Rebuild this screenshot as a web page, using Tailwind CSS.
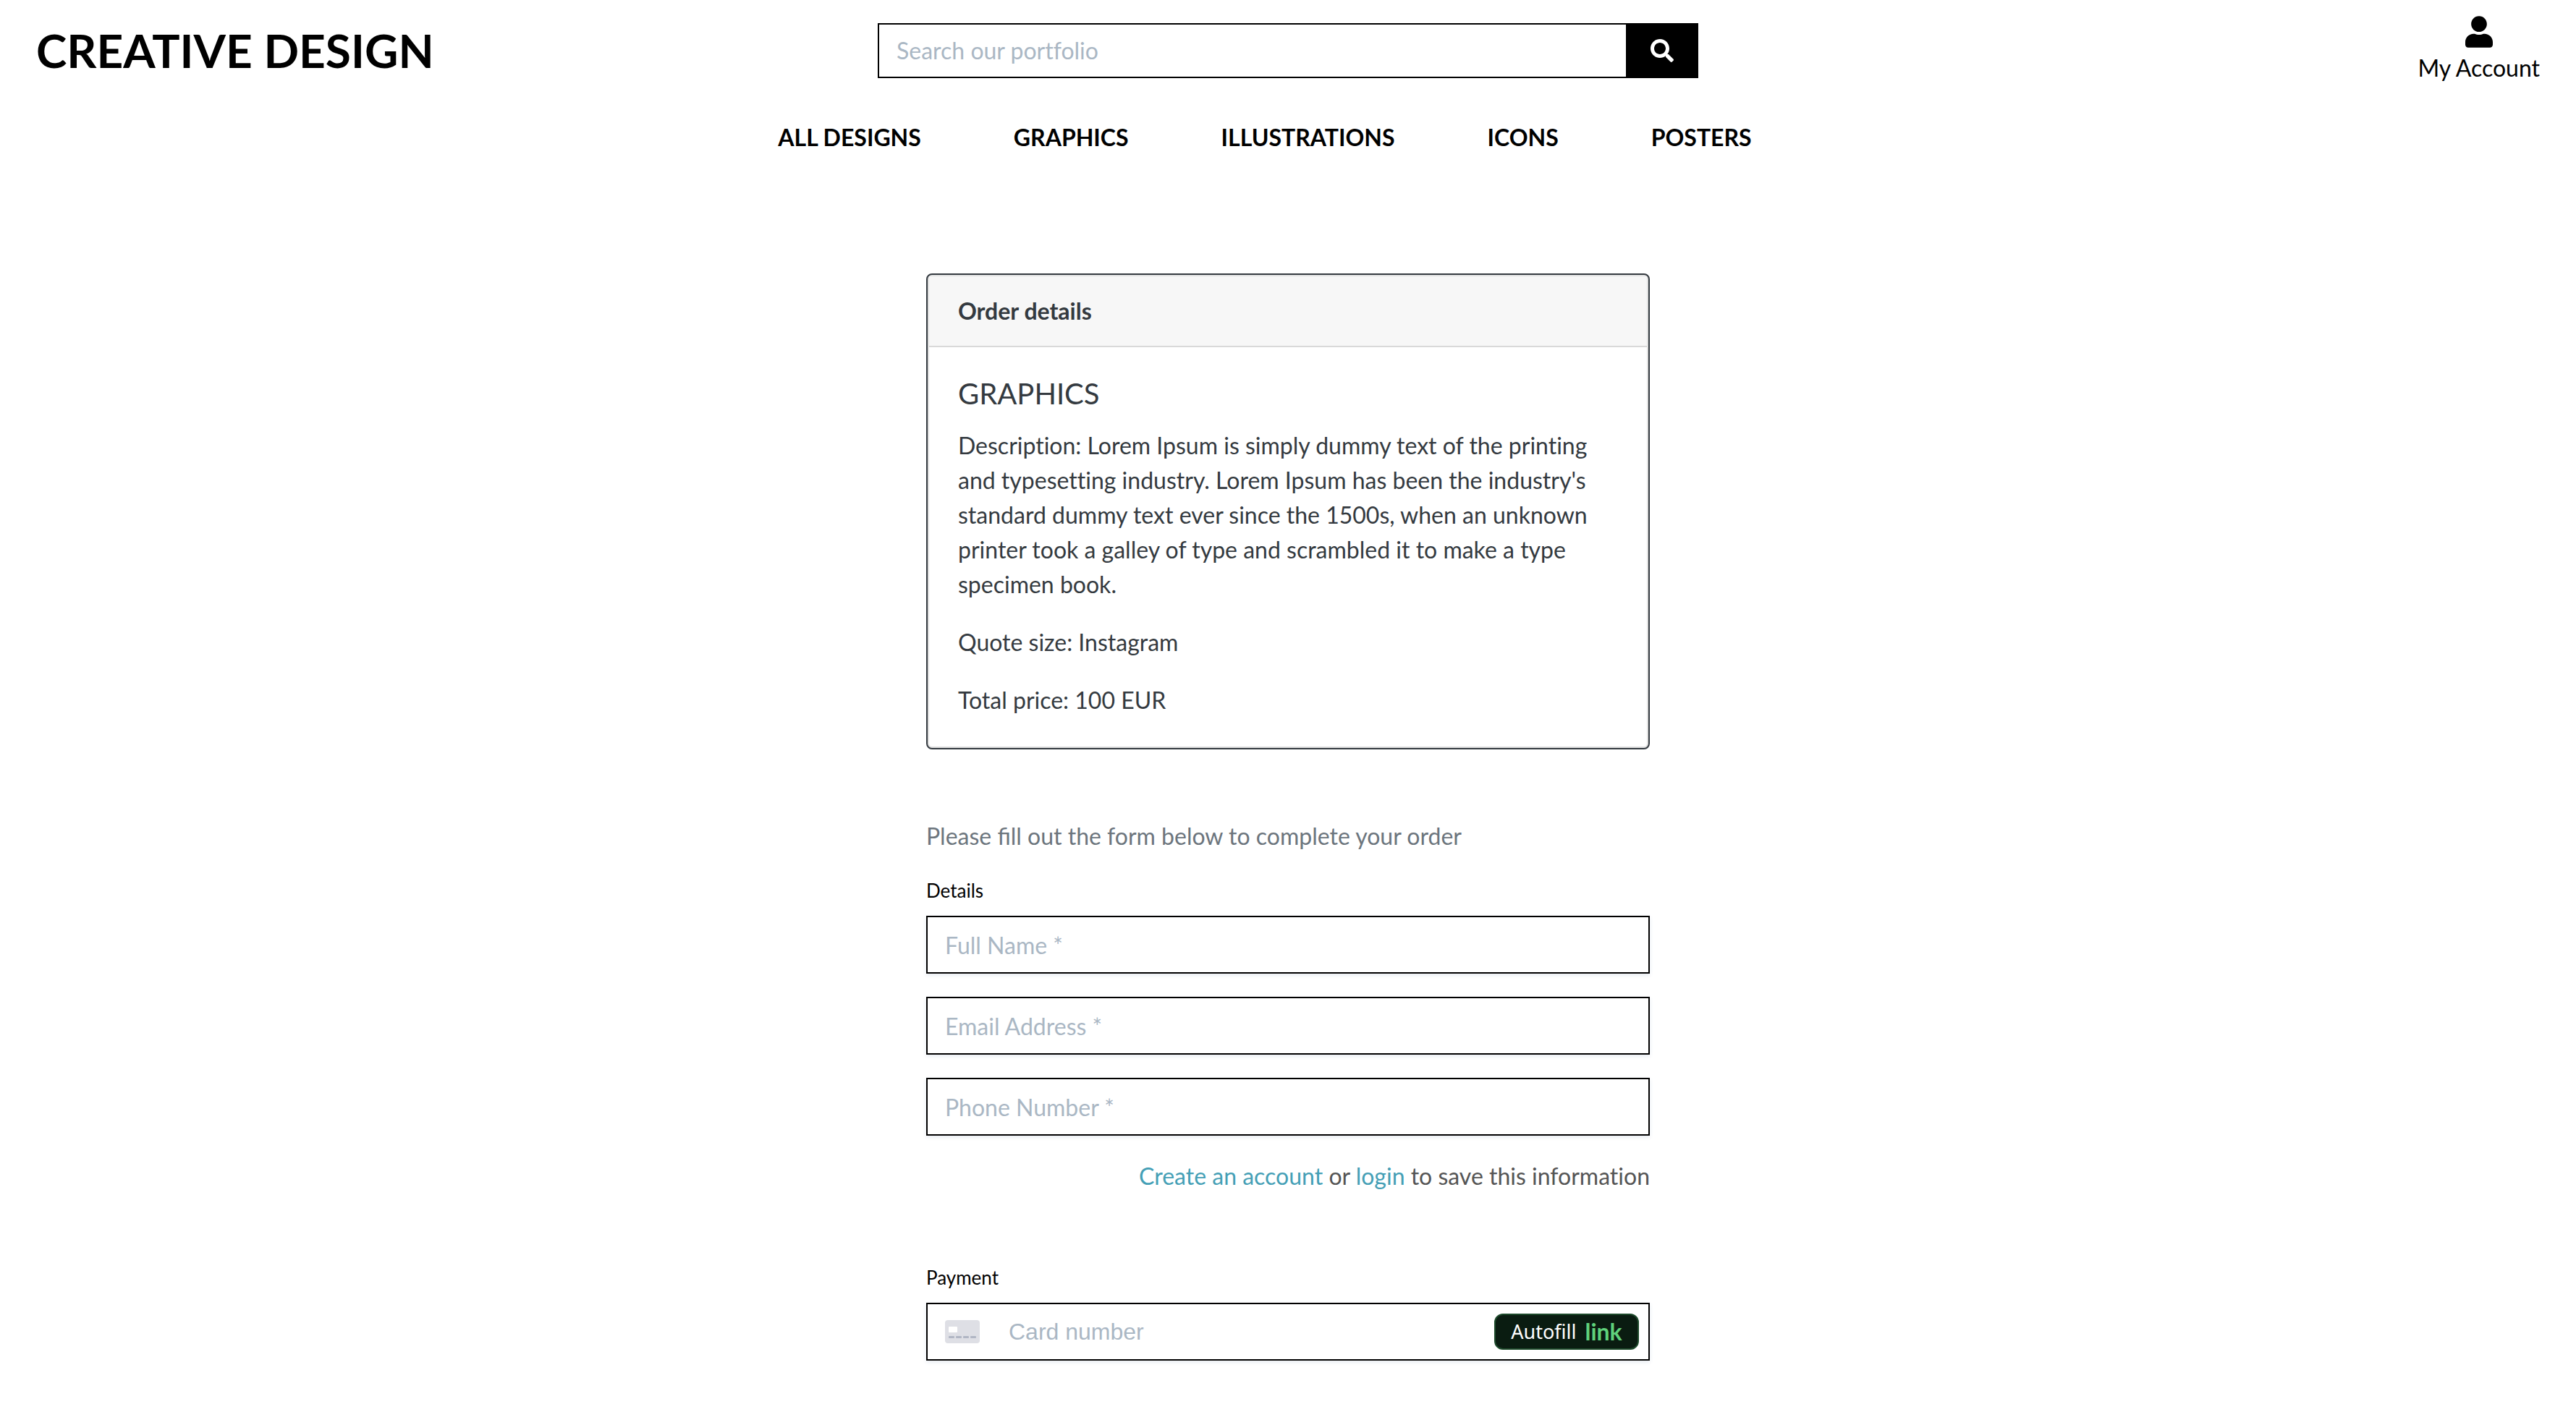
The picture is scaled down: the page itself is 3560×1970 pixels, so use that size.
<!DOCTYPE html>
<html lang="en">
<head>
<meta charset="utf-8">
<meta name="viewport" content="width=device-width, initial-scale=1">
<title>Creative Design - Checkout</title>
<script src="https://cdn.jsdelivr.net/npm/@tailwindcss/browser@4"></script>
</head>
<body class="min-h-screen bg-white font-[Lato,sans-serif] text-[32px] leading-12 text-black [font-variant-ligatures:no-common-ligatures]">
<header>
  <div class="grid h-[140px] grid-cols-[1fr_minmax(0,1134px)_1fr] items-center px-[50px]">
    <a href="#" class="justify-self-start text-[64px] leading-[76px] font-bold whitespace-nowrap">CREATIVE DESIGN</a>
    <form class="flex h-[76px]" role="search">
      <input type="search" aria-label="Search our portfolio" placeholder="Search our portfolio" class="min-w-0 flex-1 border-2 border-r-0 border-black px-6 placeholder:text-[#aab7c4]">
      <button type="button" aria-label="Search" class="flex w-[100px] items-center justify-center bg-black text-white">
        <svg class="size-8" viewBox="0 0 512 512" fill="currentColor"><path d="M505 442.7L405.3 343c-4.500-4.500-10.600-7-17-7H372c27.600-35.300 44-79.700 44-128C416 93.100 322.900 0 208 0S0 93.100 0 208s93.100 208 208 208c48.300 0 92.700-16.400 128-44v16.300c0 6.400 2.500 12.500 7 17l99.700 99.700c9.400 9.400 24.600 9.400 33.900 0l28.300-28.300c9.400-9.400 9.400-24.600.1-34zM208 336c-70.700 0-128-57.200-128-128 0-70.700 57.200-128 128-128 70.700 0 128 57.200 128 128 0 70.700-57.200 128-128 128z"/></svg>
      </button>
    </form>
    <a href="#" class="flex flex-col items-center gap-1 justify-self-end">
      <svg class="h-11 w-[38px]" viewBox="0 0 448 512" fill="currentColor"><path d="M224 256c70.700 0 128-57.300 128-128S294.700 0 224 0 96 57.300 96 128s57.300 128 128 128zm89.600 32h-16.700c-22.200 10.200-46.900 16-72.900 16s-50.600-5.800-72.900-16h-16.700C60.200 288 0 348.200 0 422.400V464c0 26.500 21.500 48 48 48h352c26.500 0 48-21.500 48-48v-41.600c0-74.200-60.200-134.400-134.400-134.400z"/></svg>
      <span>My Account</span>
    </a>
  </div>
  <nav class="mt-[26px] flex justify-center gap-32 pr-16 font-bold">
    <a href="#">ALL DESIGNS</a>
    <a href="#">GRAPHICS</a>
    <a href="#">ILLUSTRATIONS</a>
    <a href="#">ICONS</a>
    <a href="#">POSTERS</a>
  </nav>
</header>

<main class="mx-auto mt-[164px] w-full max-w-[1000px] pb-[88px]">
  <section class="rounded-[8px] border-2 border-[#343a40] text-[#343a40]">
    <div class="rounded-[6px] border-2 border-black/12">
      <h2 class="border-b-2 border-black/12 bg-[#f7f7f7] px-10 py-6 font-bold">Order details</h2>
      <div class="p-10">
        <h3 class="mb-6 text-[40px] leading-12">GRAPHICS</h3>
        <div class="flex flex-col gap-8">
          <p>Description: Lorem Ipsum is simply dummy text of the printing and typesetting industry. Lorem Ipsum has been the industry's standard dummy text ever since the 1500s, when an unknown printer took a galley of type and scrambled it to make a type specimen book.</p>
          <p>Quote size: Instagram</p>
          <p>Total price: 100 EUR</p>
        </div>
      </div>
    </div>
  </section>

  <form class="mt-24">
    <p class="mb-8 text-[#6c757d] [font-variant-ligatures:normal]">Please fill out the form below to complete your order</p>
    <fieldset>
      <legend class="mb-4 text-[26px] leading-[38px]">Details</legend>
      <div class="flex flex-col gap-8">
        <input type="text" aria-label="Full Name" placeholder="Full Name *" class="h-20 w-full border-2 border-black px-6 shadow-[0_2px_6px_#e6ebf1] placeholder:text-[#aab7c4]">
        <input type="email" aria-label="Email Address" placeholder="Email Address *" class="h-20 w-full border-2 border-black px-6 shadow-[0_2px_6px_#e6ebf1] placeholder:text-[#aab7c4]">
        <input type="tel" aria-label="Phone Number" placeholder="Phone Number *" class="h-20 w-full border-2 border-black px-6 shadow-[0_2px_6px_#e6ebf1] placeholder:text-[#aab7c4]">
        <p class="text-right text-[#555555]"><a href="#" class="text-[#459fb6]">Create an account</a> or <a href="#" class="text-[#459fb6]">login</a> to save this information</p>
      </div>
    </fieldset>
    <fieldset class="mt-[97px]">
      <legend class="mb-4 text-[26px] leading-[38px]">Payment</legend>
      <div class="flex h-20 items-center border-2 border-black pr-[13px] pl-6 shadow-[0_2px_6px_#e6ebf1]">
        <svg class="h-8 w-12 shrink-0" viewBox="0 0 48 32" aria-hidden="true">
          <rect width="48" height="32" rx="4" fill="#dedfe5"/>
          <rect x="5" y="9" width="12" height="8" rx="1" fill="#fff"/>
          <path d="M6 22h6a1 1 0 0 1 1 1v1a1 1 0 0 1-1 1H6a1 1 0 0 1-1-1v-1a1 1 0 0 1 1-1zm10 0h6a1 1 0 0 1 1 1v1a1 1 0 0 1-1 1h-6a1 1 0 0 1-1-1v-1a1 1 0 0 1 1-1zm10 0h6a1 1 0 0 1 1 1v1a1 1 0 0 1-1 1h-6a1 1 0 0 1-1-1v-1a1 1 0 0 1 1-1zm10 0h6a1 1 0 0 1 1 1v1a1 1 0 0 1-1 1h-6a1 1 0 0 1-1-1v-1a1 1 0 0 1 1-1z" fill="#b1b6c4"/>
        </svg>
        <input type="text" inputmode="numeric" aria-label="Card number" placeholder="Card number" class="ml-10 min-w-0 flex-1 font-['Liberation_Sans',sans-serif] placeholder:text-[#aab7c4]">
        <button type="button" class="flex h-[50px] w-[200px] items-center justify-center gap-3 rounded-[12px] border-2 border-[#1d4a2b] bg-[#0a1c11] font-['Noto_Sans',sans-serif] text-[27px] leading-[46px] text-white">
          <span>Autofill</span>
          <span class="font-[Lato,sans-serif] text-[32px] font-bold text-[#5fd27b]">link</span>
        </button>
      </div>
    </fieldset>
  </form>
</main>
</body>
</html>
